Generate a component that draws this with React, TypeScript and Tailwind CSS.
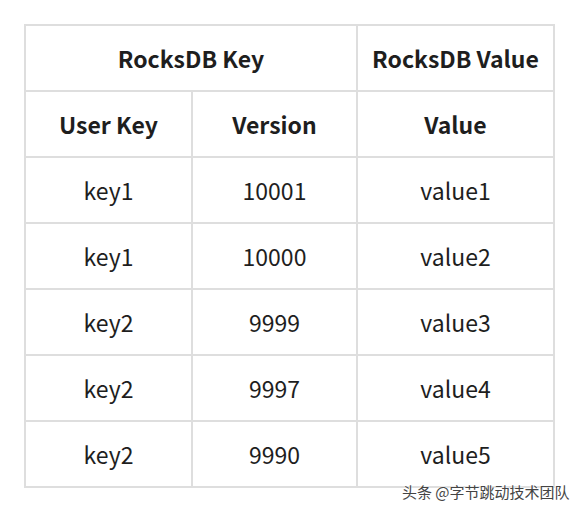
import React from "react";

const rows = [
  ["key1", "10001", "value1"],
  ["key1", "10000", "value2"],
  ["key2", "9999", "value3"],
  ["key2", "9997", "value4"],
  ["key2", "9990", "value5"],
];

export default function App() {
  const cell = "border-2 border-[#dedede] text-center align-middle h-[66px] p-0";
  return (
    <div
      className="relative w-[580px] h-[513px] bg-white text-[#1e1e1e]"
      style={{ fontFamily: '"Noto Sans CJK SC", "Noto Sans", sans-serif' }}
    >
      <div className="pt-[24px] pl-[24px]">
        <table className="border-collapse w-[529px] table-fixed text-[23px]">
          <colgroup>
            <col className="w-[167px]" />
            <col className="w-[165px]" />
            <col className="w-[197px]" />
          </colgroup>
          <thead>
            <tr>
              <th colSpan={2} className={cell + " font-bold"}>RocksDB Key</th>
              <th className={cell + " font-bold"}>RocksDB Value</th>
            </tr>
            <tr>
              <th className={cell + " font-bold"}>User Key</th>
              <th className={cell + " font-bold"}>Version</th>
              <th className={cell + " font-bold"}>Value</th>
            </tr>
          </thead>
          <tbody>
            {rows.map((r, i) => (
              <tr key={i}>
                {r.map((c, j) => (
                  <td key={j} className={cell + " font-normal"}>{c}</td>
                ))}
              </tr>
            ))}
          </tbody>
        </table>
      </div>
      <div
        className="absolute left-[402px] top-[482px] text-[15px] leading-[20px] text-[#444]"
        style={{ textShadow: "0 0 2px #fff, 0 0 2px #fff" }}
      >
        头条 @字节跳动技术团队
      </div>
    </div>
  );
}
